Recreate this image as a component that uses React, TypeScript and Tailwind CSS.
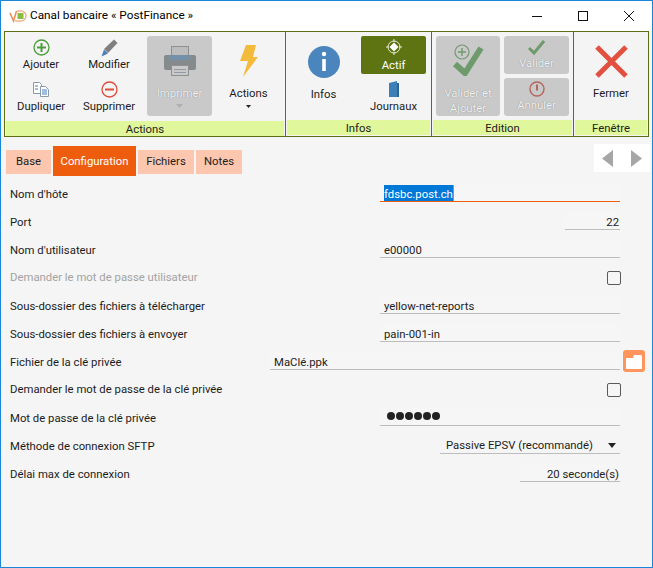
import React from 'react';

const rowClass = 'flex items-center h-[28px] pl-[9px] pr-[32px]';
const ghostText = 'text-[11.33px] leading-[15px] text-[#f2f2f2] [text-shadow:0_0_1px_#777]';

function Small({ icon, label }: { icon: React.ReactNode; label: string }) {
  return (
    <div className="w-[68px] h-[42px] flex flex-col items-center justify-start">
      <div className="h-[19px] flex items-center justify-center">{icon}</div>
      <div className="text-[11.33px] leading-[16px] -mt-[1px]">{label}</div>
    </div>
  );
}

function Group({
  title,
  width,
  children,
}: {
  title: string;
  width: string;
  children: React.ReactNode;
}) {
  return (
    <div
      className={`${width} flex flex-col border-r border-[#5b7016] last:border-r-0`}
    >
      <div className="h-[89px] flex">{children}</div>
      <div className="mx-px mb-px h-[15px] bg-[#e0f79b] text-center text-[11.33px] leading-[16px] text-[#222]">
        {title}
      </div>
    </div>
  );
}

function Field({
  label,
  muted,
  raised,
  children,
}: {
  label: string;
  muted?: boolean;
  raised?: boolean;
  children: React.ReactNode;
}) {
  return (
    <div className={rowClass}>
      <div
        className={`text-[11.33px] ${raised ? '-mt-[2px]' : ''} ${muted ? 'text-[#a3a3a3]' : 'text-[#1c1c1c]'}`}
      >
        {label}
      </div>
      <div className="ml-auto flex items-center">{children}</div>
    </div>
  );
}

function Input({
  width,
  value,
  right,
}: {
  width: string;
  value: React.ReactNode;
  right?: boolean;
}) {
  return (
    <div
      className={`${width} h-[18px] mb-[2px] border-b border-[#bdbdbd] bg-[#f6f6f6] px-[4px] text-[11.33px] leading-[20px] text-[#222] ${right ? 'text-right pr-[1px]' : ''}`}
    >
      {value}
    </div>
  );
}

function Check() {
  return (
    <div className="w-[14px] h-[14px] mr-[-1px] border border-[#5a5a5a] rounded-[2px] bg-[#f6f6f6]" />
  );
}

function PrinterIcon() {
  return (
    <svg width="34" height="32" viewBox="0 0 34 32">
      <rect x="8.500" y="1.500" width="17" height="10" fill="#bdbdbd" stroke="#8f8f8f" />
      <path d="M3 10h28a2 2 0 0 1 2 2v11a2 2 0 0 1-2 2H3a2 2 0 0 1-2-2V12a2 2 0 0 1 2-2z" fill="#858a8c" />
      <rect x="7" y="10" width="20" height="5" fill="#7390aa" />
      <rect x="8.500" y="20.500" width="17" height="10" fill="#c9c9c9" stroke="#8f8f8f" />
      <path d="M11 24.500h12M11 27.500h12" stroke="#8f9aa4" />
    </svg>
  );
}

export default function App() {
  return (
    <div className="w-[653px] h-[568px] overflow-hidden bg-[#f5f5f5] border border-[#1a86d9] font-['Roboto',sans-serif] text-[#1c1c1c] flex flex-col">
      {/* title bar */}
      <div className="h-[30px] bg-white flex items-center shrink-0">
        <svg className="ml-[8px]" width="18" height="14" viewBox="0 0 18 14">
          <path d="M1 4l3.500 8 3-10" fill="none" stroke="#e88a55" strokeWidth="1.500" />
          <path d="M8 2h4a5 5 0 0 1 0 10H6" fill="none" stroke="#f0b48c" strokeWidth="1.500" />
          <rect x="8.500" y="4" width="6" height="6" fill="#8dbb3f" />
        </svg>
        <div className="ml-[3px] text-[11.8px] text-black">
          Canal bancaire « PostFinance »
        </div>
        <div className="ml-auto flex items-center">
          <svg width="46" height="30" viewBox="0 0 46 30">
            <path d="M18 15.500h10" stroke="#111" />
          </svg>
          <svg width="46" height="30" viewBox="0 0 46 30">
            <rect x="18.500" y="10.500" width="9" height="9" fill="none" stroke="#111" />
          </svg>
          <svg width="46" height="30" viewBox="0 0 46 30">
            <path d="M18 10l10 10M28 10L18 20" stroke="#111" />
          </svg>
        </div>
      </div>

      {/* ribbon */}
      <div className="h-[106px] mx-[3px] shrink-0 flex border border-[#5b7016] bg-[#f4f4f4]">
        <Group title="Actions" width="w-[281px]">
          <div className="w-[138px] pl-[2px] pt-[6px] flex flex-wrap content-start">
            <Small
              label="Ajouter"
              icon={
                <svg width="17" height="17" viewBox="0 0 17 17">
                  <circle cx="8.500" cy="8.500" r="7.500" fill="none" stroke="#4a9e3c" strokeWidth="1.300" />
                  <path d="M8.500 4v9M4 8.500h9" stroke="#4a9e3c" strokeWidth="2" />
                </svg>
              }
            />
            <Small
              label="Modifier"
              icon={
                <svg width="18" height="18" viewBox="0 0 18 18">
                  <path d="M14 0.500l3.500 3.500-9.500 10-4-4z" fill="#7f7f7f" />
                  <path d="M4 10.500l4 4-6.500 3z" fill="#4a7fb8" />
                </svg>
              }
            />
            <Small
              label="Dupliquer"
              icon={
                <svg width="18" height="17" viewBox="0 0 18 17">
                  <path d="M1.500 1.500h6l2 2v9h-8z" fill="#fff" stroke="#8a9aa8" />
                  <path d="M8.500 5.500h5l3 3v7h-8z" fill="#fff" stroke="#8a9aa8" />
                  <path d="M3 5h3M3 8h3M10 9h5M10 11h5M10 13h5" stroke="#3f7fc0" />
                </svg>
              }
            />
            <Small
              label="Supprimer"
              icon={
                <svg width="17" height="17" viewBox="0 0 17 17">
                  <circle cx="8.500" cy="8.500" r="7.500" fill="none" stroke="#e04a3a" strokeWidth="1.300" />
                  <path d="M4 8.500h9" stroke="#e04a3a" strokeWidth="2" />
                </svg>
              }
            />
          </div>
          <div className="mt-[4px] ml-[4px] w-[65px] h-[80px] rounded-[3px] bg-[#c9c9c9] flex flex-col items-center pt-[9px]">
            <PrinterIcon />
            <div className={`${ghostText} mt-[9px]`}>Imprimer</div>
            <svg className="mt-[3px]" width="7" height="4" viewBox="0 0 7 4">
              <path d="M0 0h7L3.500 4z" fill="#b0b0b0" />
            </svg>
          </div>
          <div className="flex-1 flex flex-col items-center pt-[13px]">
            <svg width="18" height="32" viewBox="0 0 18 32">
              <path d="M6 0h10l-3 12h5L3 32l5-16H0z" fill="#f2bb3c" />
            </svg>
            <div className="text-[11.33px] leading-[16px] mt-[8px]">Actions</div>
            <svg className="mt-[4px]" width="5" height="3" viewBox="0 0 5 3">
              <path d="M0 0h5L2.500 3z" fill="#222" />
            </svg>
          </div>
        </Group>

        <Group title="Infos" width="w-[146px]">
          <div className="w-[75px] flex flex-col items-center pt-[14px]">
            <svg width="32" height="32" viewBox="0 0 32 32">
              <circle cx="16" cy="16" r="16" fill="#4a86bd" />
              <circle cx="16" cy="8" r="2.200" fill="#fff" />
              <rect x="14.200" y="13" width="3.600" height="12" fill="#fff" />
            </svg>
            <div className="text-[11.33px] leading-[16px] mt-[8px]">Infos</div>
          </div>
          <div className="w-[65px] flex flex-col items-center pt-[4px]">
            <div className="w-[65px] h-[38px] rounded-[2px] bg-[#5e7412] flex flex-col items-center pt-[3px] text-white">
              <svg width="16" height="16" viewBox="0 0 16 16">
                <circle cx="8" cy="8" r="6" fill="none" stroke="#e6ecd4" />
                <path d="M8 3.500l4.500 4.500-4.500 4.500-4.500-4.500z" fill="#fff" />
                <path d="M8 0v3M8 13v3M0 8h3M13 8h3" stroke="#e6ecd4" />
              </svg>
              <div className="text-[11.33px] leading-[16px] mt-[2px]">Actif</div>
            </div>
            <svg className="mt-[7px]" width="12" height="16" viewBox="0 0 12 16">
              <path d="M1 2l8-2v2h2v14H1z" fill="#3f7fb8" />
              <path d="M9 2h2v14H9z" fill="#2d6494" />
            </svg>
            <div className="text-[11.33px] leading-[16px] mt-[1px]">Journaux</div>
          </div>
        </Group>

        <Group title="Edition" width="w-[142px]">
          <div className="mt-[4px] ml-[4px] h-[80px] w-[64px] rounded-[3px] bg-[#c9c9c9] flex flex-col items-center pt-[4px]">
            <svg width="32" height="36" viewBox="0 0 32 36">
              <path d="M3 24l10 9L29 8" fill="none" stroke="#6f9a6c" strokeWidth="6" />
              <circle cx="10" cy="12" r="7" fill="#c9c9c9" stroke="#6f9a6c" strokeWidth="1.200" />
              <path d="M10 8v8M6 12h8" stroke="#6f9a6c" strokeWidth="1.400" />
            </svg>
            <div className={`${ghostText} text-center mt-[10px]`}>Valider et Ajouter</div>
          </div>
          <div className="ml-[4px] mt-[4px] w-[65px] flex flex-col gap-[4px]">
            <div className="h-[38px] rounded-[3px] bg-[#c9c9c9] flex flex-col items-center pt-[3px]">
              <svg width="17" height="16" viewBox="0 0 17 16">
                <path d="M1 9l5 5L16 2" fill="none" stroke="#6f9a6c" strokeWidth="3" />
              </svg>
              <div className={`${ghostText} mt-[1px]`}>Valider</div>
            </div>
            <div className="h-[38px] rounded-[3px] bg-[#c9c9c9] flex flex-col items-center pt-[3px]">
              <svg width="16" height="16" viewBox="0 0 16 16">
                <circle cx="8" cy="8" r="7" fill="none" stroke="#b4665e" strokeWidth="1.400" />
                <path d="M8 3.500v6" stroke="#b4665e" strokeWidth="2" />
              </svg>
              <div className={`${ghostText} mt-[1px]`}>Annuler</div>
            </div>
          </div>
        </Group>

        <Group title="Fenêtre" width="flex-1">
          <div className="flex-1 flex flex-col items-center pt-[13px]">
            <svg width="33" height="33" viewBox="0 0 33 33">
              <path d="M2 2l29 29M31 2L2 31" stroke="#e25040" strokeWidth="5" />
            </svg>
            <div className="text-[11.33px] leading-[16px] mt-[7px]">Fermer</div>
          </div>
        </Group>
      </div>

      {/* tabs */}
      <div className="h-[36px] mt-[6px] pl-[5px] pr-[2px] flex items-center shrink-0 text-[11.33px] gap-[2px]">
        <div className="w-[45px] h-[24px] mt-[1px] bg-[#fcc7ae] flex items-center justify-center">Base</div>
        <div className="w-[83px] h-[30px] bg-[#ee5d0e] text-[#fff] flex items-center justify-center">
          Configuration
        </div>
        <div className="w-[56px] h-[24px] mt-[1px] bg-[#fcc7ae] flex items-center justify-center">Fichiers</div>
        <div className="w-[46px] h-[24px] mt-[1px] bg-[#fcc7ae] flex items-center justify-center">Notes</div>
        <div className="ml-auto w-[56px] h-[28px] mb-[6px] bg-white flex items-center justify-between px-[8px]">
          <svg width="11" height="17" viewBox="0 0 11 17">
            <path d="M11 0v17L0 8.500z" fill="#a6a6a6" />
          </svg>
          <svg width="11" height="17" viewBox="0 0 11 17">
            <path d="M0 0v17l11-8.500z" fill="#a6a6a6" />
          </svg>
        </div>
      </div>

      {/* form */}
      <div className="mt-[1px] flex flex-col">
        <Field label="Nom d'hôte">
          <div className="w-[240px] h-[18px] mb-[2px] border-b border-[#ee5d0e] bg-[#f6f6f6] px-[4px] flex items-start text-[11.33px]">
            <span className="h-[16px] mt-px leading-[18px] bg-[#0078d7] text-white border-r border-[#ee7a2a]">
              fdsbc.post.ch
            </span>
          </div>
        </Field>
        <Field label="Port">
          <Input width="w-[55px]" value="22" right />
        </Field>
        <Field label="Nom d'utilisateur">
          <Input width="w-[240px]" value="e00000" />
        </Field>
        <Field label="Demander le mot de passe utilisateur" muted raised>
          <Check />
        </Field>
        <Field label="Sous-dossier des fichiers à télécharger">
          <Input width="w-[240px]" value="yellow-net-reports" />
        </Field>
        <Field label="Sous-dossier des fichiers à envoyer">
          <Input width="w-[240px]" value="pain-001-in" />
        </Field>
        <div className={`${rowClass} relative`}>
          <div className="text-[11.33px]">Fichier de la clé privée</div>
          <div className="ml-auto">
            <Input width="w-[350px]" value="MaClé.ppk" />
          </div>
          <div className="absolute left-[622px] top-[2px] w-[22px] h-[22px] rounded-[3px] bg-[#fd955c] flex items-center justify-center">
            <svg width="16" height="15" viewBox="0 0 16 15">
              <path d="M0 4h7l1-3h7l1 1v13H0z" fill="#fff" />
            </svg>
          </div>
        </div>
        <Field label="Demander le mot de passe de la clé privée" raised>
          <Check />
        </Field>
        <Field label="Mot de passe de la clé privée">
          <Input
            width="w-[240px]"
            value={
              <span className="flex gap-[1px] pt-[4px] ml-[3px]">
                {[0, 1, 2, 3, 4, 5].map((dot) => (
                  <span key={dot} className="w-[8px] h-[8px] rounded-full bg-[#222]" />
                ))}
              </span>
            }
          />
        </Field>
        <Field label="Méthode de connexion SFTP">
          <div className="w-[180px] h-[18px] mb-[2px] pt-[2px] border-b border-[#bdbdbd] flex items-center text-[11.33px] pl-[6px]">
            Passive EPSV (recommandé)
            <svg className="ml-auto mr-[4px]" width="8" height="5" viewBox="0 0 8 5">
              <path d="M0 0h8L4 5z" fill="#222" />
            </svg>
          </div>
        </Field>
        <Field label="Délai max de connexion">
          <Input width="w-[100px]" value="20 seconde(s)" right />
        </Field>
      </div>
    </div>
  );
}
